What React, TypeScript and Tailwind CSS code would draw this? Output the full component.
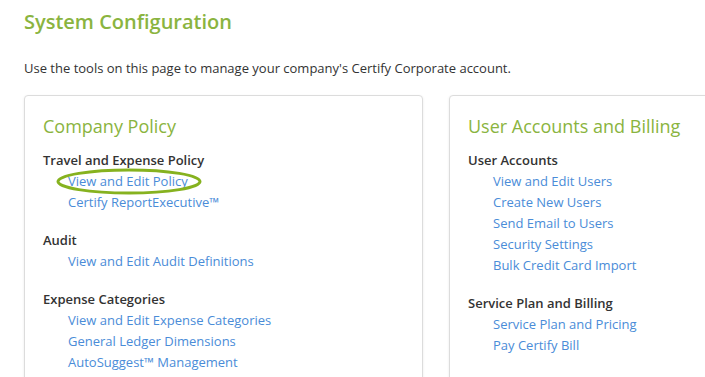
const sections = {
  left: {
    title: "Company Policy",
    groups: [
      {
        name: "Travel and Expense Policy",
        links: ["View and Edit Policy", "Certify ReportExecutive™"],
      },
      { name: "Audit", links: ["View and Edit Audit Definitions"] },
      {
        name: "Expense Categories",
        links: [
          "View and Edit Expense Categories",
          "General Ledger Dimensions",
          "AutoSuggest™ Management",
        ],
      },
    ],
  },
  right: {
    title: "User Accounts and Billing",
    groups: [
      {
        name: "User Accounts",
        links: [
          "View and Edit Users",
          "Create New Users",
          "Send Email to Users",
          "Security Settings",
          "Bulk Credit Card Import",
        ],
      },
      {
        name: "Service Plan and Billing",
        links: ["Service Plan and Pricing", "Pay Certify Bill"],
      },
    ],
  },
};

type Card = typeof sections.left;

function PanelCard({ card, highlight }: { card: Card; highlight?: string }) {
  return (
    <div className="w-[399px] shrink-0 rounded border border-[#dcdcdc] bg-white pl-[18px] pt-4 pb-6 shadow-[0_1px_3px_rgba(0,0,0,0.08)]">
      <h2 className="text-[18px] leading-[28px] text-[#8ab440]">{card.title}</h2>
      <div className="mt-[10px] flex flex-col gap-[17px]">
        {card.groups.map((g) => (
          <div key={g.name}>
            <div className="text-[13px] leading-[21px] font-semibold text-[#333]">{g.name}</div>
            <ul className="pl-[25px]">
              {g.links.map((l) => (
                <li key={l} className="text-[13px] leading-[21px] text-[#4a8cd8]">
                  <a href="#" className="relative inline-block">
                    {l}
                    {l === highlight && (
                      <svg
                        className="pointer-events-none absolute left-[-12px] top-[-3px]"
                        width="146"
                        height="27"
                        viewBox="0 0 146 27"
                      >
                        <ellipse
                          cx="73"
                          cy="13.5"
                          rx="71"
                          ry="11.5"
                          fill="none"
                          stroke="#86b21f"
                          strokeWidth="3"
                        />
                      </svg>
                    )}
                  </a>
                </li>
              ))}
            </ul>
          </div>
        ))}
      </div>
    </div>
  );
}

export default function App() {
  return (
    <div
      className="h-[377px] w-[705px] overflow-hidden bg-white pl-6 pt-[7px]"
      style={{ fontFamily: '"Open Sans", "Liberation Sans", sans-serif' }}
    >
      <h1 className="text-[20px] leading-[30px] font-semibold text-[#8ab440]">System Configuration</h1>
      <p className="mt-[21px] text-[13px] leading-[21px] text-[#333]">
        Use the tools on this page to manage your company's Certify Corporate account.
      </p>
      <div className="mt-4 flex gap-[26px]">
        <PanelCard card={sections.left} highlight="View and Edit Policy" />
        <PanelCard card={sections.right} />
      </div>
    </div>
  );
}
